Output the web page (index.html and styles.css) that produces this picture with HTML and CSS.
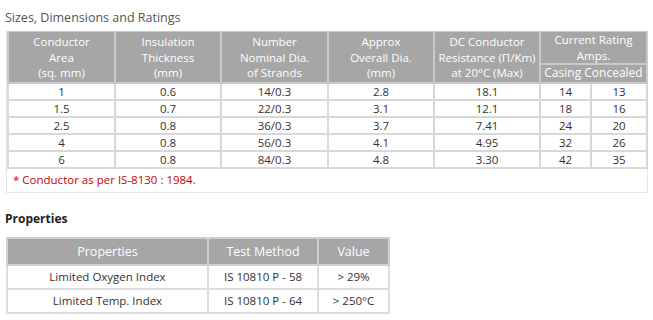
FILE: index.html
```html
<!DOCTYPE html>
<html>
<head>
<meta charset="utf-8">
<link rel="stylesheet" href="styles.css">
</head>
<body>
<div class="page">
  <h2 class="title">Sizes, Dimensions and Ratings</h2>
  <div class="box">
    <table class="spec">
      <colgroup>
        <col style="width:107px"><col style="width:106px"><col style="width:107px"><col style="width:106px"><col style="width:106px"><col style="width:51px"><col style="width:56px">
      </colgroup>
      <thead>
        <tr>
          <th rowspan="2">Conductor<br>Area<br>(sq. mm)</th>
          <th rowspan="2">Insulation<br>Thickness<br>(mm)</th>
          <th rowspan="2">Number<br>Nominal Dia.<br>of Strands</th>
          <th rowspan="2">Approx<br>Overall Dia.<br>(mm)</th>
          <th rowspan="2">DC Conductor<br>Resistance (Π/Km)<br>at 20°C (Max)</th>
          <th colspan="2" class="group">Current Rating<br>Amps.</th>
        </tr>
        <tr>
          <th colspan="2" class="sub">Casing Concealed</th>
        </tr>
      </thead>
      <tbody>
        <tr><td>1</td><td>0.6</td><td>14/0.3</td><td>2.8</td><td>18.1</td><td>14</td><td>13</td></tr>
        <tr><td>1.5</td><td>0.7</td><td>22/0.3</td><td>3.1</td><td>12.1</td><td>18</td><td>16</td></tr>
        <tr><td>2.5</td><td>0.8</td><td>36/0.3</td><td>3.7</td><td>7.41</td><td>24</td><td>20</td></tr>
        <tr><td>4</td><td>0.8</td><td>56/0.3</td><td>4.1</td><td>4.95</td><td>32</td><td>26</td></tr>
        <tr><td>6</td><td>0.8</td><td>84/0.3</td><td>4.8</td><td>3.30</td><td>42</td><td>35</td></tr>
      </tbody>
    </table>
    <p class="note">* Conductor as per IS-8130 : 1984.</p>
  </div>

  <h3 class="heading">Properties</h3>
  <table class="props">
    <colgroup>
      <col style="width:201px"><col style="width:110px"><col style="width:71px">
    </colgroup>
    <thead>
      <tr><th>Properties</th><th>Test Method</th><th>Value</th></tr>
    </thead>
    <tbody>
      <tr><td>Limited Oxygen Index</td><td>IS 10810 P - 58</td><td>&gt; 29%</td></tr>
      <tr><td>Limited Temp. Index</td><td>IS 10810 P - 64</td><td>&gt; 250°C</td></tr>
    </tbody>
  </table>
</div>
</body>
</html>
```

FILE: styles.css
```css
html, body {
  margin: 0;
  padding: 0;
  background: #ffffff;
}

.page {
  font-family: "Open Sans", "Liberation Sans", sans-serif;
  padding: 9px 0 0 5px;
  color: #333333;
}

.title {
  margin: 0 0 4px 0;
  font-size: 12.5px;
  line-height: 18px;
  font-weight: normal;
  color: #555555;
}

.box {
  width: 640px;
  margin-left: 1px;
  border: 1px solid #e6e6e6;
  border-top: none;
}

.spec {
  width: 639px;
  border-collapse: collapse;
  table-layout: fixed;
  font-size: 11.5px;
}

.spec th {
  background: #a6a6a6;
  color: #ffffff;
  font-weight: normal;
  font-size: 11.5px;
  line-height: 15.5px;
  padding: 2px 0 1px;
  border: 2px solid #cacaca;
  border-top: 1px solid #cacaca;
  text-align: center;
  vertical-align: middle;
}

.spec th.group {
  padding: 0;
  line-height: 15.5px;
}

.spec th.sub {
  font-size: 12px;
  line-height: 16px;
  padding: 0;
  white-space: nowrap;
}

.spec td {
  text-align: center;
  line-height: 15px;
  padding: 0;
  border: 2px solid #d8d8d8;
  color: #333333;
}

.note {
  margin: 0;
  padding: 4px 0 5px 6px;
  font-size: 11.5px;
  line-height: 14px;
  color: #cc0000;
}

.heading {
  margin: 17px 0 9px 0;
  font-size: 12px;
  line-height: 18px;
  font-weight: bold;
  color: #222222;
}

.props {
  margin-left: 1px;
  border-collapse: collapse;
  table-layout: fixed;
  width: 382px;
  border: 1px solid #e2e2e2;
}

.props th {
  background: #a6a6a6;
  color: #ffffff;
  font-weight: normal;
  font-size: 12.5px;
  line-height: 20px;
  padding: 3px 0 2px;
  border: 2px solid #cfcfcf;
  text-align: center;
}

.props td {
  text-align: center;
  font-size: 11.5px;
  line-height: 16px;
  padding: 3px 0 3px;
  border: 2px solid #dedede;
  color: #333333;
}
```
